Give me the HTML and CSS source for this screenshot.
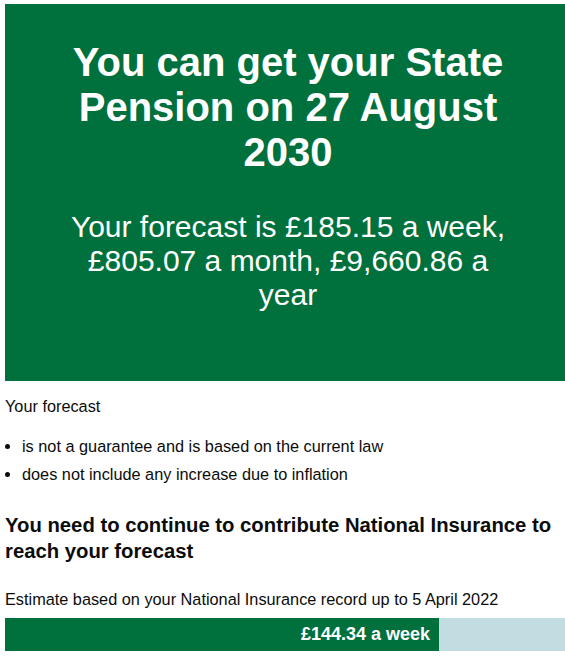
FILE: index.html
```html
<!DOCTYPE html>
<html lang="en">
<head>
<meta charset="utf-8">
<title>State Pension forecast</title>
<link rel="stylesheet" href="styles.css">
</head>
<body>
<main class="page">
  <div class="panel">
    <h1 class="panel-title">You can get your State Pension on 27 August 2030</h1>
    <div class="panel-body">Your forecast is £185.15 a week, £805.07 a month, £9,660.86 a year</div>
  </div>
  <p class="body intro">Your forecast</p>
  <ul class="list">
    <li>is not a guarantee and is based on the current law</li>
    <li>does not include any increase due to inflation</li>
  </ul>
  <h2 class="heading">You need to continue to contribute National Insurance to reach your forecast</h2>
  <p class="body estimate">Estimate based on your National Insurance record up to 5 April 2022</p>
  <div class="chart">
    <div class="chart-bar" style="width: 77.5%">£144.34 a week</div>
  </div>
</main>
</body>
</html>
```

FILE: styles.css
```css
html, body {
  margin: 0;
  padding: 0;
  background: #ffffff;
}

body {
  font-family: "Liberation Sans", Arial, sans-serif;
  color: #0b0c0c;
  overflow: hidden;
}

.page {
  padding: 4px 0 0 5px;
}

.panel {
  background: #00703c;
  color: #ffffff;
  text-align: center;
  padding: 36px 56px 69px 62px;
}

.panel-title {
  margin: 0;
  font-size: 40px;
  line-height: 45px;
  font-weight: 700;
}

.panel-body {
  margin-top: 35px;
  font-size: 30px;
  line-height: 34px;
}

.body {
  margin: 0;
  font-size: 16.3px;
  line-height: 20px;
}

.intro {
  margin-top: 15px;
}

.list {
  margin: 20px 0 0;
  padding: 0 0 0 17px;
  font-size: 16.3px;
  line-height: 20px;
}

.list li {
  margin-bottom: 8px;
}

.list li:last-child {
  margin-bottom: 0;
}

.heading {
  margin: 28px 0 0;
  font-size: 20.3px;
  line-height: 26px;
  font-weight: 700;
}

.estimate {
  margin-top: 25px;
}

.chart {
  margin-top: 9px;
  height: 33px;
  background: #c2dde2;
  display: flex;
}

.chart-bar {
  background: #00703c;
  color: #ffffff;
  font-weight: 700;
  font-size: 18px;
  display: flex;
  align-items: center;
  justify-content: flex-end;
  padding-right: 9px;
  box-sizing: border-box;
}
```
